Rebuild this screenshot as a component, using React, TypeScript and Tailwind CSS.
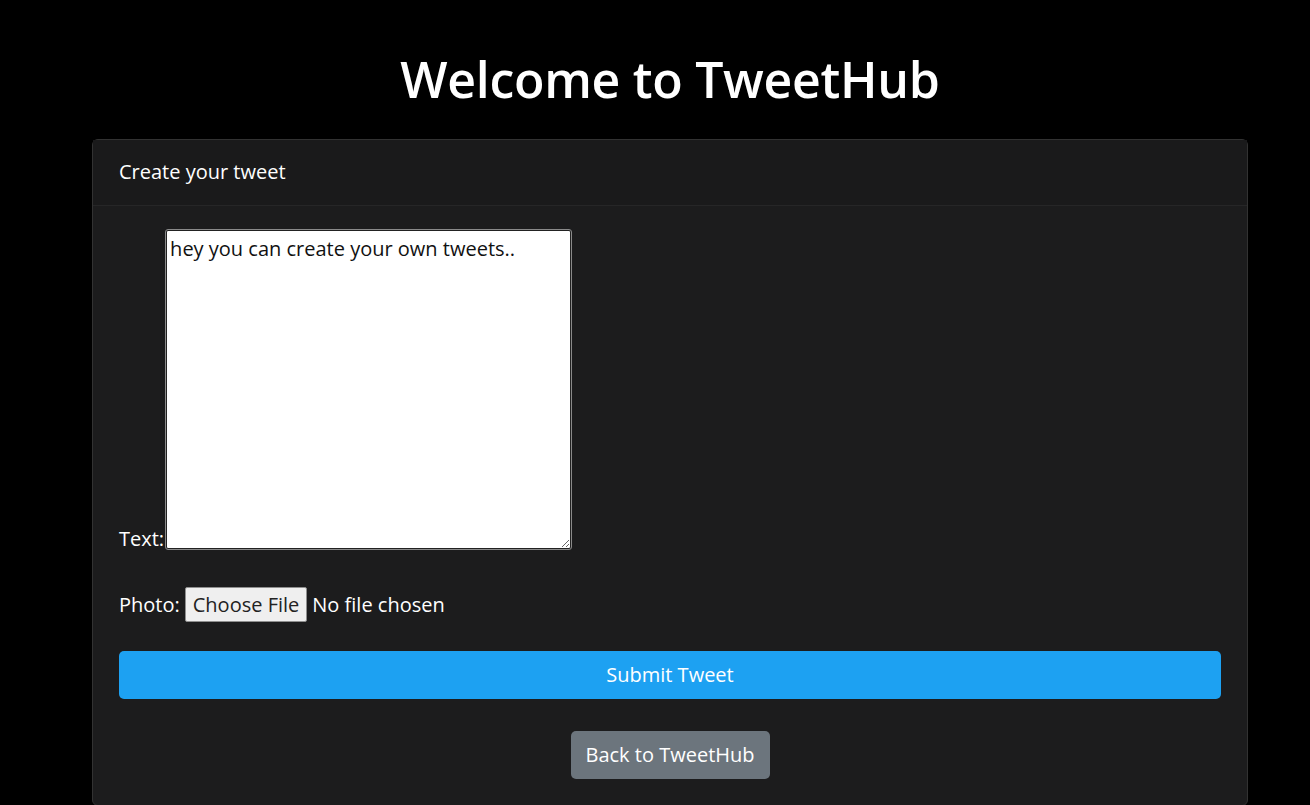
export default function App() {
  return (
    <div
      className="min-h-screen bg-black text-white"
      style={{ fontFamily: '"Open Sans", "Noto Sans", sans-serif' }}
    >
      <h1 className="pt-[46px] pb-[26px] pl-[30px] text-center text-[50px] font-semibold leading-[67px] tracking-[-0.3px]">
        Welcome to TweetHub
      </h1>

      <div className="ml-[92px] w-[1156px] rounded-[6px] border border-[#323232] bg-[#1c1c1d]">
        <div className="h-[66px] border-b border-[#262627] bg-[#1a1a1b] px-[26px] pt-[18px] text-[20px] leading-[28px]">
          Create your tweet
        </div>

        <div className="px-[26px] pt-[24px] pb-[26px]">
          <div className="flex items-end gap-[2px]">
            <span className="text-[20px] leading-[20px]">Text:</span>
            <textarea
              defaultValue="hey you can create your own tweets.."
              className="h-[319px] w-[405px] resize rounded-[2px] border border-[#222] bg-white px-[3px] py-[5px] text-[20px] leading-[26px] text-[#111] outline outline-1 outline-[#8a8a8a]"
            />
          </div>

          <div className="mt-[38px] flex items-center gap-[5px] text-[20px]">
            <span>Photo:</span>
            <span className="rounded-[2px] border border-[#8f8f8f] bg-[#efefef] px-[7px] py-[2px] leading-[29px] text-[#222]">
              Choose File
            </span>
            <span>No file chosen</span>
          </div>

          <button className="mt-[29px] h-[48px] w-full rounded-[5px] bg-[#1da1f2] text-[20px] text-white">
            Submit Tweet
          </button>

          <div className="mt-[32px] flex justify-center">
            <button className="h-[48px] w-[199px] rounded-[5px] bg-[#6c757d] text-[20px] text-white">
              Back to TweetHub
            </button>
          </div>
        </div>
      </div>
    </div>
  );
}
